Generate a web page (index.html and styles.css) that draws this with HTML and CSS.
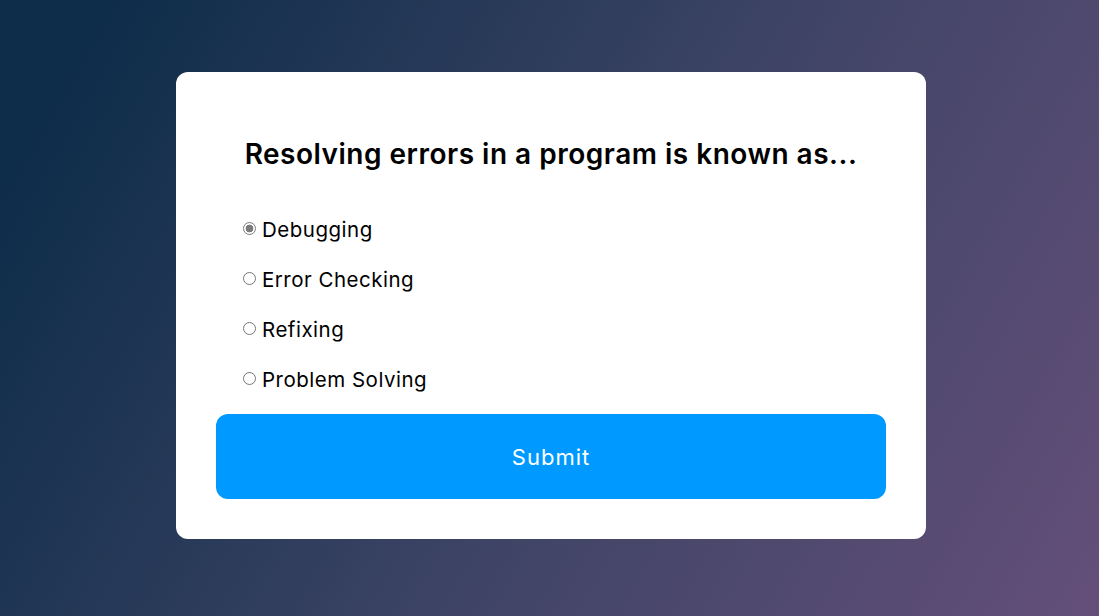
FILE: index.html
```html
<!DOCTYPE html>
<html lang="en">
<head>
<meta charset="UTF-8">
<title>Quiz</title>
<link rel="stylesheet" href="styles.css">
</head>
<body>
<div class="quiz-container">
  <div class="quiz-header">
    <h2 class="question">Resolving errors in a program is known as...</h2>
    <ul class="answers">
      <li><label><input type="radio" name="answer" class="answer" checked><span>Debugging</span></label></li>
      <li><label><input type="radio" name="answer" class="answer"><span>Error Checking</span></label></li>
      <li><label><input type="radio" name="answer" class="answer"><span>Refixing</span></label></li>
      <li><label><input type="radio" name="answer" class="answer"><span>Problem Solving</span></label></li>
    </ul>
  </div>
  <button class="submit">Submit</button>
</div>
</body>
</html>
```
FILE: styles.css
```css
* { box-sizing: border-box; }
html, body { height: 100%; }
body {
  margin: 0;
  font-family: "Inter", "Noto Sans", sans-serif;
  background: linear-gradient(120deg, #0e2d4a 8%, #3e4465 55%, #644f79 100%);
  display: flex;
  justify-content: center;
  align-items: center;
}
.quiz-container {
  width: 750px;
  height: 467px;
  margin: -5px 0 0 3px;
  background: #fff;
  border-radius: 12px;
  padding: 40px;
  display: flex;
  flex-direction: column;
}
.quiz-header { padding-top: 25px; }
.question {
  margin: 0;
  text-align: center;
  font-size: 28px;
  line-height: 34px;
  font-weight: 600;
  letter-spacing: 0.5px;
  color: #000;
}
.answers {
  list-style: none;
  margin: 44px 0 0;
  padding: 0 0 0 27px;
  display: flex;
  flex-direction: column;
  gap: 20px;
}
.answers li {
  height: 30px;
  font-size: 20.5px;
  line-height: 30px;
  letter-spacing: 0.5px;
  color: #000;
}
.answers label { display: flex; align-items: center; cursor: pointer; }
.answer {
  appearance: none;
  -webkit-appearance: none;
  width: 13px;
  height: 13px;
  margin: -3px 6px 0 0;
  border: 1px solid #767676;
  border-radius: 50%;
  background: #fff;
  flex: none;
}
.answer:checked {
  border-color: #7b7b7b;
  background: radial-gradient(circle, #7b7b7b 0 3.6px, #fff 4.2px);
}
.submit {
  margin-top: 19px;
  height: 85px;
  width: 100%;
  border: none;
  border-radius: 12px;
  background: #0099ff;
  color: #fff;
  font-family: inherit;
  font-size: 22px;
  letter-spacing: 1px;
  cursor: pointer;
}
```
